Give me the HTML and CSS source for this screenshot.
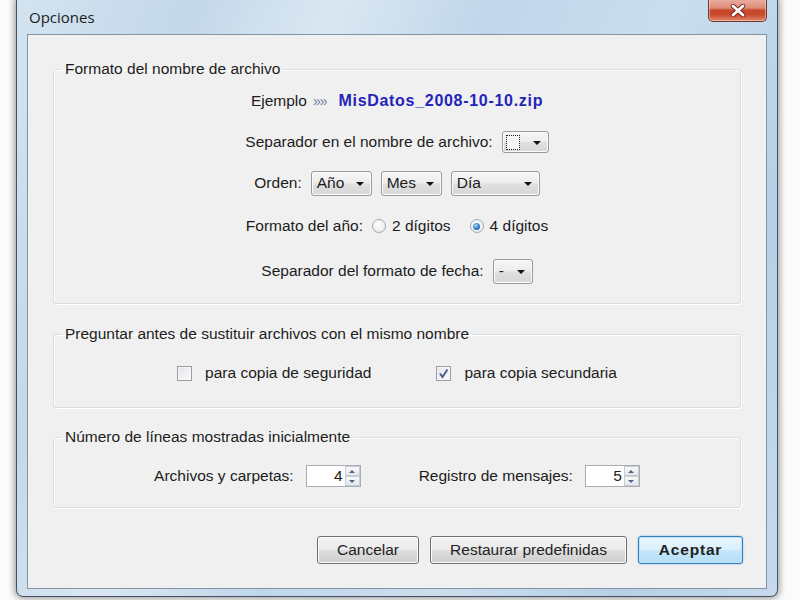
FILE: index.html
```html
<!DOCTYPE html>
<html lang="es">
<head>
    <meta charset="UTF-8">
    <title>Opciones</title>
<link rel="stylesheet" href="styles.css">
</head>
<body>
    <div class="window">
        <div class="titlebar">
            <span class="title">Opciones</span>
            <button class="close-btn">
                <svg width="16" height="13" viewBox="0 0 16 13">
                    <path d="M3 2 L13 11 M13 2 L3 11" stroke="#6b2416" stroke-width="4.4" stroke-linecap="round"/>
                    <path d="M3 2 L13 11 M13 2 L3 11" stroke="#ffffff" stroke-width="2.8" stroke-linecap="round"/>
                </svg>
            </button>
        </div>

        <div class="client">
            <!-- Formato del nombre -->
            <fieldset class="group">
                <legend>Formato del nombre de archivo</legend>
                <div class="rows">
                    <div class="row">
                        <span>Ejemplo</span>
                        <span class="raquo">»»</span>
                        <span class="sample">MisDatos_2008-10-10.zip</span>
                    </div>
                    <div class="row">
                        <span class="label">Separador en el nombre de archivo:</span>
                        <div class="combo combo-sep">
                            <span class="focus-box"></span>
                            <span class="arrow"></span>
                        </div>
                    </div>
                    <div class="row">
                        <span class="label">Orden:</span>
                        <div class="combo combo-small"><span>Año</span><span class="arrow"></span></div>
                        <div class="combo combo-small"><span>Mes</span><span class="arrow"></span></div>
                        <div class="combo combo-wide"><span>Día</span><span class="arrow"></span></div>
                    </div>
                    <div class="row row-year">
                        <span class="label">Formato del año:</span>
                        <span class="radio"></span>
                        <span class="opt">2 dígitos</span>
                        <span class="radio checked"></span>
                        <span class="opt">4 dígitos</span>
                    </div>
                    <div class="row row-date">
                        <span class="label">Separador del formato de fecha:</span>
                        <div class="combo combo-dash"><span>-</span><span class="arrow"></span></div>
                    </div>
                </div>
            </fieldset>

            <!-- Sustituir archivos -->
            <fieldset class="group group-replace">
                <legend>Preguntar antes de sustituir archivos con el mismo nombre</legend>
                <div class="row row-checks">
                    <span class="check"></span>
                    <span class="opt">para copia de seguridad</span>
                    <span class="check checked">
                        <svg width="11" height="11" viewBox="0 0 11 11"><path d="M2 5.5 L4.5 9 L9.5 1.5" fill="none" stroke="#4b5f94" stroke-width="2"/></svg>
                    </span>
                    <span class="opt">para copia secundaria</span>
                </div>
            </fieldset>

            <!-- Lineas -->
            <fieldset class="group group-lines">
                <legend>Número de líneas mostradas inicialmente</legend>
                <div class="row row-spins">
                    <span class="label">Archivos y carpetas:</span>
                    <div class="spin">
                        <span class="spin-value">4</span>
                        <span class="spin-btns"><span class="up"></span><span class="down"></span></span>
                    </div>
                    <span class="label label-gap">Registro de mensajes:</span>
                    <div class="spin">
                        <span class="spin-value">5</span>
                        <span class="spin-btns"><span class="up"></span><span class="down"></span></span>
                    </div>
                </div>
            </fieldset>

            <div class="buttons">
                <button class="btn btn-cancel">Cancelar</button>
                <button class="btn btn-reset">Restaurar predefinidas</button>
                <button class="btn btn-ok">Aceptar</button>
            </div>
        </div>
    </div>
</body>
</html>
```

FILE: styles.css
```css
body {
    margin: 0;
    width: 800px;
    height: 600px;
    overflow: hidden;
    background-color: #fbfbfb;
    font-family: "Liberation Sans", Arial, sans-serif;
    font-size: 15.5px;
    color: #1c1c1c;
}

/* Window frame */
.window {
    box-sizing: border-box;
    width: 762px;
    height: 597px;
    margin-left: 16px;
    padding: 0 10px 7px 10px;
    border: 1px solid #44525f;
    border-top: none;
    border-radius: 0 0 7px 7px;
    background: linear-gradient(112deg, #d3e3f0 0%, #c4d8ea 18%, #dae7f2 32%, #c0d6ea 48%, #cbdeee 66%, #b7cfe5 84%, #c6daec 100%);
    box-shadow: 0 0 6px 2px rgba(0, 0, 0, 0.35);
    display: flex;
    flex-direction: column;
}

.titlebar {
    height: 34px;
    flex-shrink: 0;
    display: flex;
    align-items: center;
    position: relative;
}

.title {
    font-family: "Open Sans", "Liberation Sans", sans-serif;
    font-size: 15px;
    margin-left: 2px;
    margin-top: -1px;
    color: #1c1c1c;
}

.close-btn {
    position: absolute;
    top: -1px;
    right: 0;
    width: 59px;
    height: 23px;
    padding: 0;
    border: 1px solid #6e3a30;
    border-top: none;
    border-radius: 0 0 5px 5px;
    background: linear-gradient(#eab0a2 0%, #de8c77 40%, #c9462b 52%, #c94a2e 72%, #e08a6c 100%);
    box-shadow: inset 0 0 0 1px rgba(255, 220, 210, 0.5);
    display: flex;
    justify-content: center;
    align-items: center;
}

.client {
    box-sizing: border-box;
    width: 740px;
    height: 555px;
    border: 1px solid #8294a6;
    background-color: #f0f0f0;
    padding-top: 26px;
}

/* Group boxes */
.group {
    margin: 0 25px;
    padding: 0;
    min-width: 0;
    border: 1px solid #d5dfe5;
    border-radius: 3px;
    box-shadow: 1px 1px 0 #ffffff, inset 1px 1px 0 #ffffff;
}

.group legend {
    margin-left: 8px;
    padding: 0 3px;
    line-height: 16px;
}

.group-replace {
    margin-top: 22px;
}

.group-lines {
    margin-top: 21px;
}

.rows {
    display: flex;
    flex-direction: column;
    gap: 15px;
    padding: 11px 0 19px;
}

.row {
    height: 26px;
    display: flex;
    justify-content: center;
    align-items: center;
}

.row-year {
    margin-top: 2px;
}

.row-date {
    margin-top: 4px;
}

.label {
    margin-right: 9px;
}

.raquo {
    font-size: 14px;
    color: #6f7f9c;
    margin: 0 12px 0 6px;
    letter-spacing: -1px;
}

.sample {
    font-weight: bold;
    font-size: 16px;
    letter-spacing: 0.7px;
    color: #2424b8;
}

/* Combo boxes */
.combo {
    box-sizing: border-box;
    height: 25px;
    border: 1px solid #9a9a9a;
    border-radius: 3px;
    background: linear-gradient(#f7f7f7 0%, #ececec 48%, #e0e0e0 52%, #d6d6d6 100%);
    box-shadow: inset 0 0 0 1px #fbfbfb;
    display: flex;
    justify-content: space-between;
    align-items: center;
    padding: 0 7px 0 5px;
    margin-right: 9px;
}

.combo:last-child {
    margin-right: 0;
}

.arrow {
    width: 0;
    height: 0;
    border-left: 4px solid transparent;
    border-right: 4px solid transparent;
    border-top: 4px solid #111111;
    margin-top: 2px;
}

.combo-sep {
    width: 47px;
    height: 22px;
    padding-left: 3px;
}

.focus-box {
    box-sizing: border-box;
    width: 14px;
    height: 15px;
    border: 1px dotted #202020;
    background: #f4f4f4;
}

.combo-small {
    width: 61px;
}

.combo-wide {
    width: 89px;
}

.combo-dash {
    width: 40px;
}

/* Radios and checks */
.radio {
    box-sizing: border-box;
    width: 14px;
    height: 14px;
    border-radius: 50%;
    border: 1px solid #a4a9ae;
    background: radial-gradient(circle at 40% 35%, #ffffff, #e2e4e6);
    margin-right: 6px;
    display: flex;
    justify-content: center;
    align-items: center;
}

.radio.checked::after {
    content: "";
    width: 7px;
    height: 7px;
    border-radius: 50%;
    background: radial-gradient(circle at 40% 35%, #a7dcf9 0%, #2f7cc4 55%, #1b4c84 100%);
}

.radio + .opt {
    margin-right: 19px;
}

.row-year .opt:last-child {
    margin-right: 0;
}

.row-checks {
    height: 20px;
    padding: 21px 0 24px;
}

.check {
    box-sizing: border-box;
    width: 15px;
    height: 15px;
    border: 1px solid #9a9ea3;
    background: linear-gradient(135deg, #e2e4e6, #fbfbfb);
    box-shadow: inset 0 0 0 1px #f6f6f6;
    margin-right: 13px;
    display: flex;
    justify-content: center;
    align-items: center;
}

.row-checks .opt:nth-of-type(2) {
    margin-right: 65px;
}

/* Spin boxes */
.row-spins {
    height: 22px;
    padding: 20px 0;
}

.row-spins .label {
    margin-right: 12px;
}

.row-spins .label-gap {
    margin-left: 58px;
}

.spin {
    box-sizing: border-box;
    width: 55px;
    height: 22px;
    border: 1px solid #abadb3;
    background: #ffffff;
    display: flex;
}

.spin-value {
    flex: 1;
    text-align: right;
    line-height: 20px;
    padding-right: 2px;
}

.spin-btns {
    width: 15px;
    display: flex;
    flex-direction: column;
}

.spin-btns span {
    flex: 1;
    border: 1px solid #c9ccd1;
    background: linear-gradient(#f7f8f9, #e4e7ea);
    display: flex;
    justify-content: center;
    align-items: center;
}

.spin-btns .up::after {
    content: "";
    border-left: 3px solid transparent;
    border-right: 3px solid transparent;
    border-bottom: 3px solid #4e6288;
}

.spin-btns .down::after {
    content: "";
    border-left: 3px solid transparent;
    border-right: 3px solid transparent;
    border-top: 3px solid #4e6288;
}

/* Dialog buttons */
.buttons {
    display: flex;
    justify-content: flex-end;
    gap: 11px;
    margin: 28px 23px 0 0;
}

.btn {
    box-sizing: border-box;
    height: 28px;
    padding: 0;
    border: 1px solid #707070;
    border-radius: 3px;
    background: linear-gradient(#f3f3f3 0%, #ebebeb 48%, #dddddd 52%, #cfcfcf 100%);
    box-shadow: inset 0 0 0 1px #fcfcfc;
    font-family: "Liberation Sans", Arial, sans-serif;
    font-size: 15.5px;
    color: #1f1f1f;
}

.btn-cancel {
    width: 102px;
}

.btn-reset {
    width: 197px;
}

.btn-ok {
    width: 105px;
    border-color: #3c7fb1;
    background: linear-gradient(#eaf6fd 0%, #d9f0fc 48%, #c6e7fb 52%, #b3def7 100%);
    box-shadow: inset 0 0 0 1px #b9e3fa, 0 0 2px #6fb7e6;
    font-weight: bold;
    letter-spacing: 0.8px;
}
```
